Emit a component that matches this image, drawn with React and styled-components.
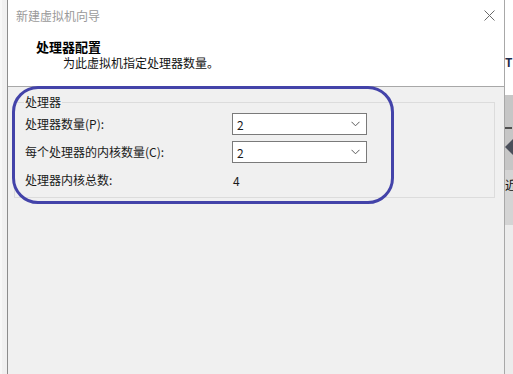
import React from "react";
import styled, { createGlobalStyle } from "styled-components";

const GlobalStyle = createGlobalStyle`
  html, body {
    margin: 0;
    padding: 0;
    background: #f0f0f0;
    overflow: hidden;
  }
  * { box-sizing: border-box; }
`;

const Screen = styled.div`
  position: relative;
  width: 513px;
  height: 374px;
  display: flex;
  overflow: hidden;
  font-family: "Noto Sans CJK SC", "Noto Sans", sans-serif;
  font-size: 12px;
  color: #1a1a1a;
`;

const LeftStrip = styled.div`
  width: 7px;
  flex: none;
  background: #f0f0f0;
  border-left: 2px solid #f7f7f7;
`;

const RightStrip = styled.div`
  width: 8px;
  flex: none;
  display: flex;
  flex-direction: column;
  overflow: hidden;
`;

const StripBand = styled.div`
  height: ${(p) => p.$h}px;
  flex: ${(p) => (p.$h ? "none" : "1")};
  background: ${(p) => p.$bg};
  display: flex;
  flex-direction: column;
  justify-content: ${(p) => p.$justify || "flex-start"};
  padding-top: ${(p) => p.$pad || 0}px;
  gap: 10px;
  white-space: nowrap;
  color: #1f2a4a;
  font-size: 12px;
  line-height: 14px;
`;

const StripDash = styled.div`
  width: 7px;
  height: 2px;
  background: #505050;
`;

const StripArrow = styled.div`
  width: 0;
  height: 0;
  border-top: 8px solid transparent;
  border-bottom: 8px solid transparent;
  border-right: 8px solid #4a4f5a;
`;

const Dialog = styled.div`
  flex: 1;
  display: flex;
  flex-direction: column;
  border-left: 1px solid #8c8c8c;
  border-right: 1px solid #a8a8a8;
  background: #f0f0f0;
`;

const TitleBar = styled.div`
  height: 30px;
  flex: none;
  background: #fff;
  display: flex;
  align-items: center;
  justify-content: space-between;
  padding: 0 9px 0 8px;
  color: #9a9a9a;
  font-size: 12px;
`;

const CloseButton = styled.svg`
  width: 11px;
  height: 11px;
  display: block;
`;

const Header = styled.div`
  height: 57px;
  flex: none;
  background: #fff;
  border-bottom: 1px solid #a8a8a8;
  padding: 8px 0 0 28px;
  display: flex;
  flex-direction: column;
  gap: 0;
`;

const HeaderTitle = styled.div`
  font-weight: 700;
  font-size: 13px;
  line-height: 17px;
  color: #000;
`;

const HeaderSub = styled.div`
  padding-left: 27px;
  font-size: 12px;
  line-height: 16px;
  color: #111;
`;

const Body = styled.div`
  flex: 1;
  padding: 7px 9px 0 6px;
`;

const GroupBox = styled.fieldset`
  margin: 0;
  padding: 0 0 3px 10px;
  border: 1px solid #dcdcdc;
  min-width: 0;
`;

const Caption = styled.legend`
  padding: 0 1px;
  margin-left: -1px;
  font-size: 12px;
  line-height: 16px;
`;

const Row = styled.div`
  height: 28px;
  display: grid;
  grid-template-columns: 207px 135px;
  align-items: center;
`;

const Label = styled.span`
  line-height: 16px;
`;

const Combo = styled.div`
  height: 22px;
  border: 1px solid #7a7a7a;
  background: #fff;
  display: flex;
  align-items: center;
  justify-content: space-between;
  padding: 0 6px 0 4px;
  font-size: 12px;
`;

const Chevron = styled.svg`
  width: 9px;
  height: 6px;
  display: block;
`;

const Value = styled.span`
  padding-left: 1px;
`;

const Annotation = styled.div`
  position: absolute;
  left: 12px;
  top: 86px;
  width: 382px;
  height: 118px;
  border: 3px solid #4343a9;
  border-radius: 26px;
  pointer-events: none;
`;

const ComboBox = ({ value }) => (
  <Combo>
    <span>{value}</span>
    <Chevron viewBox="0 0 9 6">
      <path d="M0.5 0.8 L4.5 4.8 L8.5 0.8" fill="none" stroke="#5a5a5a" strokeWidth="1" />
    </Chevron>
  </Combo>
);

export default function App() {
  return (
    <>
      <GlobalStyle />
      <Screen>
        <LeftStrip />
        <Dialog>
          <TitleBar>
            <span>新建虚拟机向导</span>
            <CloseButton viewBox="0 0 11 11">
              <path d="M0.5 0.5 L10.5 10.5 M10.5 0.5 L0.5 10.5" stroke="#6a6a6a" strokeWidth="1" />
            </CloseButton>
          </TitleBar>
          <Header>
            <HeaderTitle>处理器配置</HeaderTitle>
            <HeaderSub>为此虚拟机指定处理器数量。</HeaderSub>
          </Header>
          <Body>
            <GroupBox>
              <Caption>处理器</Caption>
              <Row>
                <Label>处理器数量(P):</Label>
                <ComboBox value="2" />
              </Row>
              <Row>
                <Label>每个处理器的内核数量(C):</Label>
                <ComboBox value="2" />
              </Row>
              <Row>
                <Label>处理器内核总数:</Label>
                <Value>4</Value>
              </Row>
            </GroupBox>
          </Body>
        </Dialog>
        <RightStrip>
          <StripBand $h={95} $bg="#fff" $pad={55}>
            <span style={{ fontWeight: 700 }}>T</span>
          </StripBand>
          <StripBand $h={75} $bg="#c6c6c6" $pad={32}>
            <StripDash />
            <StripArrow />
          </StripBand>
          <StripBand $h={55} $bg="#d4d4d4" $pad={8}>
            <span style={{ color: "#111" }}>近</span>
          </StripBand>
          <StripBand $bg="#ececec" />
        </RightStrip>
        <Annotation />
      </Screen>
    </>
  );
}
